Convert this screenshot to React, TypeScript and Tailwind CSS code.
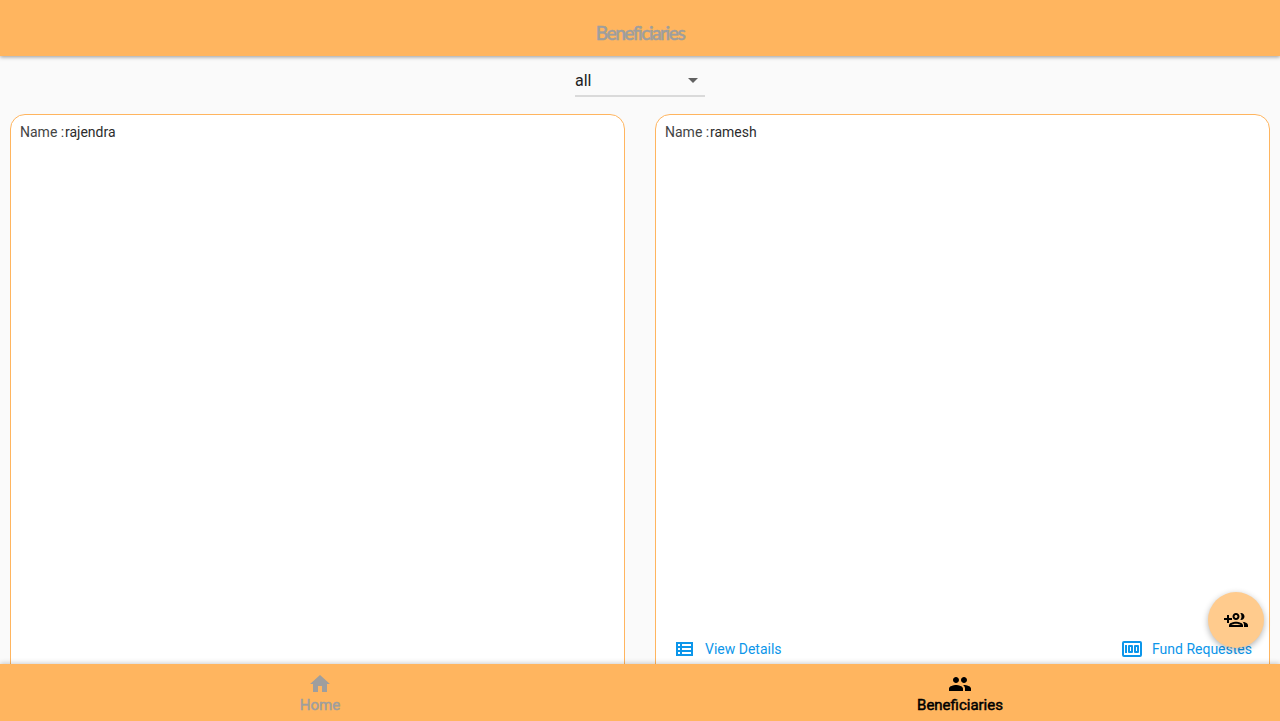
import type { ReactNode } from "react";
import { MdArrowDropDown, MdHome, MdPeople } from "react-icons/md";

function GroupAddIcon() {
  return (
    <svg width="24" height="24" viewBox="0 0 24 24" fill="currentColor" aria-hidden="true">
      <path d="M8 10H5V7H3v3H0v2h3v3h2v-3h3z" />
      <path
        fillRule="evenodd"
        d="M12 12c1.93 0 3.5-1.57 3.5-3.5S13.93 5 12 5 8.500 6.570 8.500 8.500 10.070 12 12 12zm0-5c.83 0 1.500.670 1.500 1.500S12.830 10 12 10s-1.500-.67-1.500-1.500S11.170 7 12 7z"
      />
      <path d="M17 12c1.93 0 3.5-1.57 3.5-3.5S18.93 5 17 5c-.24 0-.48.02-.71.07.76.95 1.210 2.150 1.210 3.430s-.45 2.480-1.210 3.430c.23.05.47.07.71.07z" />
      <path
        fillRule="evenodd"
        d="M12 13.75c-2.340 0-7 1.170-7 3.500V19h14v-1.750c0-2.330-4.660-3.500-7-3.500zM7.340 17c.84-.58 2.870-1.250 4.660-1.250s3.820.670 4.660 1.250z"
      />
      <path d="M18.550 13.850C19.500 14.750 20 15.900 20 17.250V19h4v-1.750c0-2-3.250-3.120-5.450-3.400z" />
    </svg>
  );
}

function ViewListIcon() {
  return (
    <svg width="24" height="24" viewBox="0 0 24 24" fill="currentColor" aria-hidden="true">
      <path d="M3 5v14h17V5H3zm4 2v2H5V7h2zm-2 6v-2h2v2H5zm0 2h2v2H5v-2zm13 2H9v-2h9v2zm0-4H9v-2h9v2zm0-4H9V7h9v2z" />
    </svg>
  );
}

function MoneyIcon() {
  return (
    <svg width="24" height="24" viewBox="0 0 24 24" fill="currentColor" aria-hidden="true">
      <path
        fillRule="evenodd"
        d="M4 4h16a2 2 0 0 1 2 2v12a2 2 0 0 1-2 2H4a2 2 0 0 1-2-2V6a2 2 0 0 1 2-2zm0 2v12h16V6z"
      />
      <path d="M5 8h2v8H5z" />
      <path
        fillRule="evenodd"
        d="M9 8h3a1 1 0 0 1 1 1v6a1 1 0 0 1-1 1H9a1 1 0 0 1-1-1V9a1 1 0 0 1 1-1zm1 2v4h1v-4z"
      />
      <path
        fillRule="evenodd"
        d="M15 8h3a1 1 0 0 1 1 1v6a1 1 0 0 1-1 1h-3a1 1 0 0 1-1-1V9a1 1 0 0 1 1-1zm1 2v4h1v-4z"
      />
    </svg>
  );
}

function CardAction({ icon, label }: { icon: ReactNode; label: string }) {
  return (
    <button className="flex items-center gap-2 text-sm leading-4 text-[#0c96ea]">
      {icon}
      <span>{label}</span>
    </button>
  );
}

function BeneficiaryCard({ name, actions }: { name: string; actions?: boolean }) {
  return (
    <section className="flex h-[615px] flex-1 flex-col rounded-[15px] border border-[#ffb55f] bg-white px-[9px] pt-2">
      <p className="flex text-sm leading-[18px] text-[#444]">
        <span className="w-[45px] whitespace-pre">Name :</span>
        <span className="text-[#2c2c2c]">{name}</span>
      </p>
      {actions && (
        <div className="mt-[496px] flex justify-between pr-2 pl-2">
          <CardAction icon={<ViewListIcon />} label="View Details" />
          <CardAction icon={<MoneyIcon />} label="Fund Requestes" />
        </div>
      )}
    </section>
  );
}

export default function App() {
  return (
    <div className="relative flex h-[721px] w-full flex-col overflow-hidden bg-[#fafafa] font-['Roboto',sans-serif]">
      <header className="z-10 flex h-14 shrink-0 justify-center bg-[#ffb55f] pt-[21px] shadow-[0_1px_4px_rgba(0,0,0,0.4)]">
        <h1 className="font-['Lato',sans-serif] text-[19px] leading-6 font-medium tracking-[-1.45px] whitespace-nowrap text-[#9e9e9e] [-webkit-text-stroke:0.5px_#9e9e9e]">
          Beneficiaries
        </h1>
      </header>
      <main className="min-h-0 flex-1 overflow-hidden px-2.5">
        <div className="mx-auto mt-2 flex h-[33px] w-[130px] items-center justify-between border-b-2 border-[#dadada] text-base text-[#212121]">
          <span className="pt-0.5">all</span>
          <MdArrowDropDown size={24} className="text-[#616161]" />
        </div>
        <div className="mt-[17px] flex gap-[30px]">
          <BeneficiaryCard name="rajendra" />
          <BeneficiaryCard name="ramesh" actions />
        </div>
      </main>
      <nav className="z-10 flex h-[57px] shrink-0 bg-[#ffb55f] text-[15px] leading-4 shadow-[0_-1px_5px_rgba(0,0,0,0.2)]">
        <a className="flex flex-1 flex-col items-center pt-2 text-[#9e9e9e]">
          <MdHome size={24} />
          <span className="mt-px [-webkit-text-stroke:0.5px_currentColor]">Home</span>
        </a>
        <a className="flex flex-1 flex-col items-center pt-2 text-black">
          <MdPeople size={24} />
          <span className="mt-px [-webkit-text-stroke:0.5px_currentColor]">Beneficiaries</span>
        </a>
      </nav>
      <button className="absolute top-[592px] right-4 z-20 flex size-14 items-center justify-center rounded-full bg-[#ffcb8d] text-black shadow-[0_2px_6px_rgba(0,0,0,0.3)]">
        <GroupAddIcon />
      </button>
    </div>
  );
}
